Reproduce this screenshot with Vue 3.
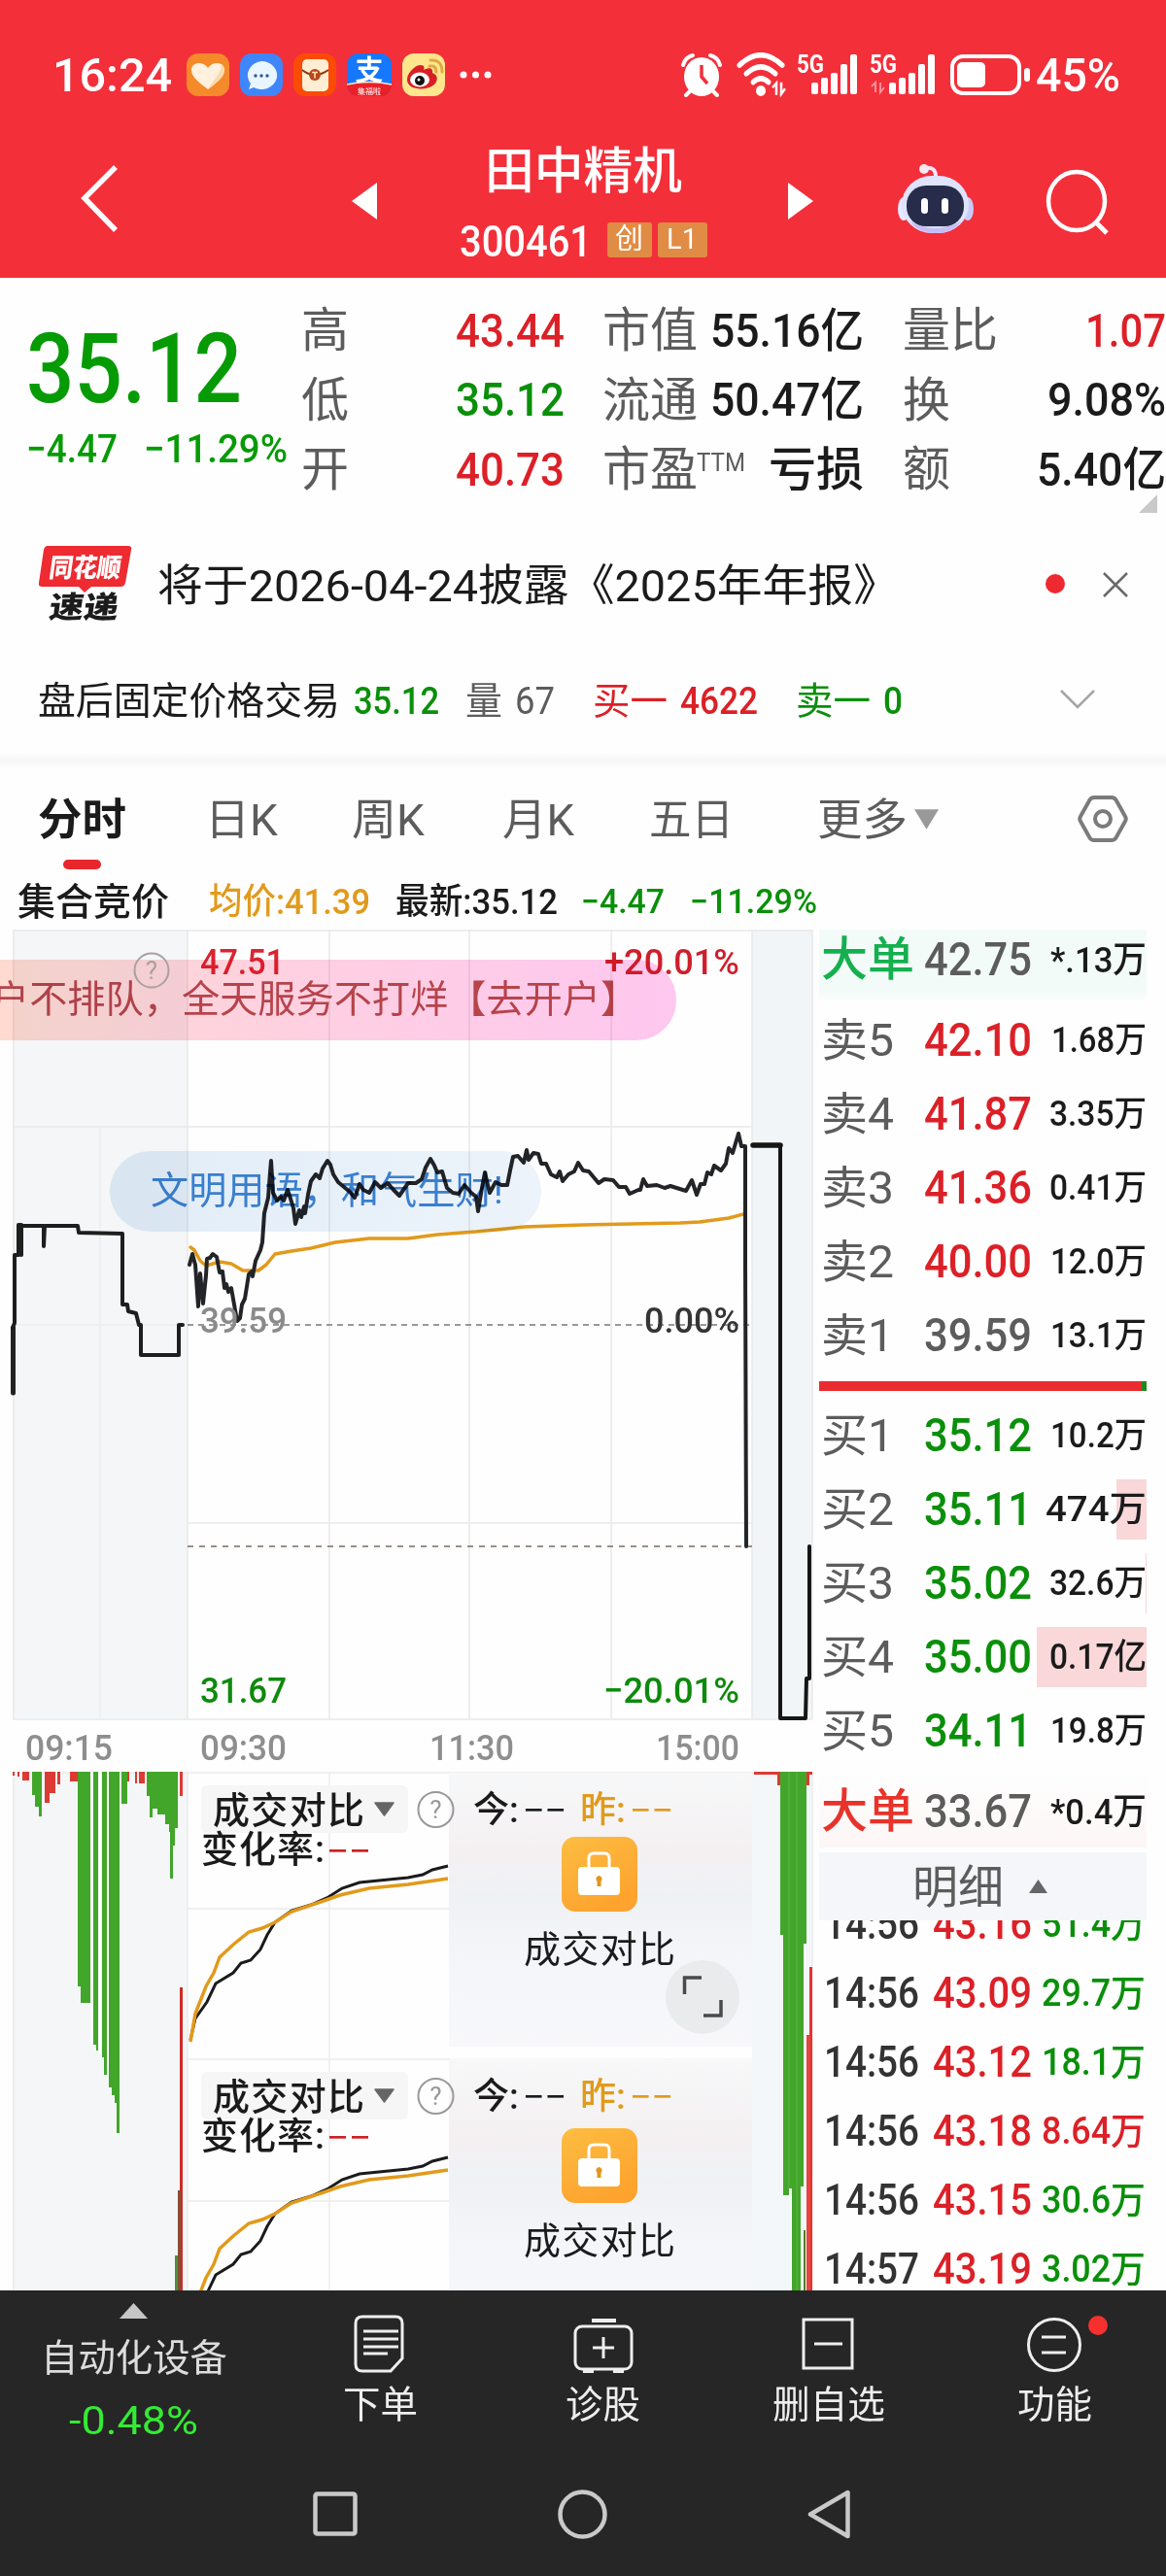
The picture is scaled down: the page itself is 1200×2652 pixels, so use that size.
<script setup>
import { h } from "vue";

// Text squeezed or stretched to a known width, centred on its own box
const Fit = (props) =>
  h("svg", { class: "fit", width: props.w, height: props.s }, [
    h(
      "text",
      {
        x: 0,
        y: props.s * 0.86,
        "font-size": props.s,
        textLength: props.w,
        lengthAdjust: "spacingAndGlyphs",
      },
      props.t
    ),
  ]);
Fit.props = ["t", "w", "s"];

const stats = [
  [
    { label: "高", lw: 49, value: "43.44", w: 112, color: "red" },
    { label: "低", lw: 49, value: "35.12", w: 112, color: "green" },
    { label: "开", lw: 49, value: "40.73", w: 112, color: "red" },
  ],
  [
    { label: "市值", lw: 98, value: "55.16亿", w: 158 },
    { label: "流通", lw: 98, value: "50.47亿", w: 158 },
    { label: "市盈", lw: 98, sup: "TTM", value: "亏损", w: 98 },
  ],
  [
    { label: "量比", lw: 98, value: "1.07", w: 83, color: "red" },
    { label: "换", lw: 49, value: "9.08%", w: 122 },
    { label: "额", lw: 49, value: "5.40亿", w: 133 },
  ],
];

const tabs = [
  { t: "分时", w: 91, active: true },
  { t: "日K", w: 75 },
  { t: "周K", w: 75 },
  { t: "月K", w: 74 },
  { t: "五日", w: 87 },
];

const sells = [
  { name: "卖5", price: "42.10", vol: "1.68万", w: 98, color: "red" },
  { name: "卖4", price: "41.87", vol: "3.35万", w: 100, color: "red" },
  { name: "卖3", price: "41.36", vol: "0.41万", w: 100, color: "red" },
  { name: "卖2", price: "40.00", vol: "12.0万", w: 99, color: "red" },
  { name: "卖1", price: "39.59", vol: "13.1万", w: 99, color: "flat" },
];

const buys = [
  { name: "买1", price: "35.12", vol: "10.2万", w: 99, bar: 0 },
  { name: "买2", price: "35.11", vol: "474万", w: 104, bar: 31 },
  { name: "买3", price: "35.02", vol: "32.6万", w: 100, bar: 1 },
  { name: "买4", price: "35.00", vol: "0.17亿", w: 100, bar: 113 },
  { name: "买5", price: "34.11", vol: "19.8万", w: 99, bar: 0 },
];

const trades = [
  { time: "14:56", price: "43.16", vol: "51.4万", color: "green" },
  { time: "14:56", price: "43.09", vol: "29.7万", color: "green" },
  { time: "14:56", price: "43.12", vol: "18.1万", color: "green" },
  { time: "14:56", price: "43.18", vol: "8.64万", color: "red" },
  { time: "14:56", price: "43.15", vol: "30.6万", color: "green" },
  { time: "14:57", price: "43.19", vol: "3.02万", color: "green" },
];

// 09:15 - 09:25
const openAuction =
  "13,410 15,405 15,335 15,335 19,335 19,304 22,304 22,335 22,305 45,305 45,326 46,305 80,305 81,312 126,313 126,386 131,386 132,393 140,395 143,407 145,407 145,438 184,438 184,407 188,407";

const price =
  "195,345 198,334 201,345 204,388 206,354 209,385 212,356 213,339 216,338 219,334 223,337 226,353 229,352 231,369 233,365 235,373 238,369 241,386 244,403 247,400 249,386 252,380 256,355 259,352 260,357 263,341 268,330 270,322 272,292 276,276 278,250 279,238 281,271 285,279 289,275 292,279 296,268 299,277 302,287 304,303 308,289 310,296 313,285 314,292 317,273 320,259 325,252 329,256 332,246 337,238 340,242 343,252 348,260 354,265 360,270 365,276 370,262 374,268 380,271 386,260 392,266 399,261 405,268 411,274 420,261 428,261 434,257 438,245 443,236 447,243 450,250 455,249 460,266 466,271 472,272 478,263 485,271 490,275 492,290 496,266 499,250 502,263 504,271 510,260 516,263 522,263 525,248 528,234 533,233 539,240 542,227 544,237 549,230 554,231 557,241 562,241 567,252 573,255 576,249 579,259 585,252 591,249 595,240 600,248 606,249 616,261 622,257 631,258 637,265 644,265 648,272 657,268 659,268 662,257 666,264 676,263 684,266 690,264 706,269 712,258 717,273 721,262 725,262 728,250 732,252 735,243 742,248 747,241 750,225 754,230 760,210 763,223 767,223 767,343 768,635";

const average =
  "196,327 200,330 206,341 212,346 226,342 238,344 250,351 266,351 274,345 283,334 300,331 320,328 345,322 380,318 420,318 450,314 490,311 540,306 600,304 700,302 720,301 750,297 765,293";

// [x, width, height] hanging from the top edge
const openVolume = [
  [13, 2, 4, "r"], [18, 2, 5, "r"], [23, 7, 9, "r"],
  [33, 3, 24, "g"], [36, 4, 36, "g"], [40, 3, 46, "g"],
  [46, 5, 32, "r"], [51, 6, 22, "r"], [59, 3, 13, "r"], [72, 8, 10, "r"],
  [80, 3, 221, "g"], [83, 10, 238, "g"], [96, 3, 281, "g"], [99, 2, 287, "g"],
  [105, 3, 294, "g"], [107, 3, 312, "g"], [112, 3, 325, "g"], [115, 3, 333, "g"],
  [118, 3, 341, "g"], [120, 3, 372, "g"], [125, 6, 33, "g"], [131, 2, 10, "r"],
  [139, 2, 12, "r"], [143, 6, 12, "r"], [151, 3, 25, "g"], [154, 3, 47, "g"],
  [157, 5, 38, "g"], [162, 8, 44, "g"], [170, 4, 54, "g"], [174, 2, 62, "g"],
  [175, 3, 110, "g"], [178, 2, 76, "g"], [180, 3, 58, "g"], [185, 3, 25, "r"],
];

const closeVolume = [
  [776, 24, 3, "r"], [800, 3, 14, "r"], [830, 3, 14, "r"], [833, 3, 3, "r"],
  [803, 3, 168, "g"], [806, 6, 436, "g"], [812, 3, 429, "g"], [815, 9, 534, "g"],
  [824, 3, 427, "g"], [827, 3, 177, "g"],
];

const compareToday =
  "196,276 201,254 213,237 222,218 240,207 248,197 258,194 268,183 275,168 283,155 300,143 320,137 338,129 352,120 370,114 400,111 420,109 435,106 445,101 461,97";
const compareYesterday =
  "196,278 201,249 212,221 220,207 226,191 240,178 256,165 270,161 283,155 300,144 330,134 350,127 380,120 420,116 461,110";
</script>

<template>
  <div class="page">
    <header class="header">
      <div class="status">
        <Fit class="medium" t="16:24" :w="123" :s="48" />
        <div class="apps">
          <svg width="44" height="44" viewBox="0 0 44 44">
            <rect width="44" height="44" rx="12" fill="#f58a2b" />
            <path d="M22 37C10 28 5 23 5 17c0-8 12-10 17-2 5-8 17-6 17 2 0 6-5 11-17 20z" fill="#fff1dd" />
            <path d="M22 37C27 27 36 21 36 11c6 5 3 14-14 26z" fill="#fbd9ae" />
          </svg>
          <svg width="44" height="44" viewBox="0 0 44 44">
            <rect width="44" height="44" rx="12" fill="#3f86fb" />
            <path d="M22 8a16 14.500 0 1 1-8 27l-5 2 2-6A16 14.500 0 0 1 22 8z" fill="#e9f5ff" />
            <circle cx="16" cy="23" r="1.700" fill="#2b5b96" />
            <circle cx="22" cy="23" r="1.700" fill="#2b5b96" />
            <circle cx="28" cy="23" r="1.700" fill="#2b5b96" />
          </svg>
          <svg width="44" height="44" viewBox="0 0 44 44">
            <rect width="44" height="44" rx="12" fill="#fb4b05" />
            <rect x="9" y="6" width="27" height="33" rx="5" fill="#ffeed3" />
            <path d="M9 17q6 5 13 5t14-5" fill="none" stroke="#8a3a10" stroke-width="2" />
            <circle cx="22" cy="22" r="6" fill="#b7481b" />
            <path d="M19 19.500h6M22 19.500v6" stroke="#ffe2b0" stroke-width="1.600" />
          </svg>
          <svg width="46" height="44" viewBox="0 0 46 44">
            <rect width="46" height="44" rx="12" fill="#1677ff" />
            <path d="M0 32q23-5 46 0v2q-2 10-12 10H12Q2 44 0 34z" fill="#e9202a" />
            <path d="M0 32q23-5 46 0" fill="none" stroke="#ffe9c8" stroke-width="1.500" />
            <text x="23" y="28" font-size="29" font-weight="700" text-anchor="middle" fill="#fff">支</text>
            <text x="23" y="42" font-size="8" text-anchor="middle" fill="#fff">集福啦</text>
          </svg>
          <svg width="44" height="44" viewBox="0 0 44 44">
            <rect width="44" height="44" rx="12" fill="#fde68c" />
            <path d="M5 27c0-7 8-15 14-15 4 0 4 3 3 5 6-3 10-2 9 3 6 2 6 8 2 12-8 7-28 6-28-5z" fill="#d81f26" />
            <ellipse cx="18" cy="27" rx="10" ry="7.500" fill="#fff" />
            <circle cx="18" cy="28" r="5" fill="#111" />
            <circle cx="17" cy="27" r="1.500" fill="#fff" />
            <path d="M28 13q7-1 7 6M29 7q12-1 12 12" fill="none" stroke="#e3a843" stroke-width="3" stroke-linecap="round" />
          </svg>
          <svg class="dots" width="34" height="8" viewBox="0 0 34 8">
            <circle cx="4" cy="4" r="3.500" fill="#fff" />
            <circle cx="16.500" cy="4" r="3.500" fill="#fff" />
            <circle cx="29" cy="4" r="3.500" fill="#fff" />
          </svg>
        </div>
        <div class="signals">
          <svg width="42" height="46" viewBox="0 0 42 46">
            <ellipse cx="21" cy="25" rx="18" ry="20" fill="#fff" />
            <path d="M2 13Q4 5 12 3M40 13Q38 5 30 3M9 40l-4 4M33 40l4 4" fill="none" stroke="#fff" stroke-width="4" stroke-linecap="round" />
            <path d="M21 13v12l6 7" fill="none" stroke="#f32f3a" stroke-width="3.500" />
          </svg>
          <svg width="52" height="46" viewBox="0 0 52 42" preserveAspectRatio="none">
            <g fill="none" stroke="#fff" stroke-width="5" stroke-linecap="round">
              <path d="M3 12Q25-7 47 12" />
              <path d="M10 20Q25 7 40 20" />
              <path d="M17 28Q25 21 33 28" />
            </g>
            <circle cx="25" cy="36" r="5" fill="#fff" />
            <path d="M37 33l4-4v11M50 34l-4 5V28" fill="none" stroke="#fff" stroke-width="2.500" />
          </svg>
          <svg width="62" height="44" viewBox="0 0 62 44">
            <text x="0" y="20" font-size="26" font-weight="700" textLength="28" lengthAdjust="spacingAndGlyphs" fill="#fff">5G</text>
            <g fill="#fff">
              <rect x="15" y="30" width="7" height="12" rx="2" />
              <rect x="25" y="25" width="7" height="17" rx="2" />
              <rect x="35" y="20" width="7" height="22" rx="2" />
              <rect x="45" y="11" width="7" height="31" rx="2" />
              <rect x="55" y="1" width="7" height="41" rx="2" />
            </g>
          </svg>
          <svg width="67" height="44" viewBox="0 0 67 44">
            <text x="0" y="20" font-size="26" font-weight="700" textLength="28" lengthAdjust="spacingAndGlyphs" fill="#fff">5G</text>
            <path d="M2 34l4-4v10M15 35l-4 5V30" fill="none" stroke="#fb9197" stroke-width="2" />
            <g fill="#fff">
              <rect x="20" y="30" width="7" height="12" rx="2" />
              <rect x="30" y="25" width="7" height="17" rx="2" />
              <rect x="40" y="20" width="7" height="22" rx="2" />
              <rect x="50" y="11" width="7" height="31" rx="2" />
              <rect x="60" y="1" width="7" height="41" rx="2" />
            </g>
          </svg>
          <svg class="battery" width="82" height="42" viewBox="0 0 82 42">
            <rect x="2" y="2" width="69" height="38" rx="11" fill="none" stroke="#fff" stroke-width="4" />
            <rect x="7" y="8" width="29" height="26" rx="5" fill="#fff" />
            <rect x="76" y="14" width="6" height="14" rx="3" fill="#fff" />
          </svg>
          <Fit class="medium pct" t="45%" :w="87" :s="48" />
        </div>
      </div>

      <div class="titlebar">
        <svg class="back" width="40" height="70" viewBox="0 0 40 70">
          <path d="M37 2L5 34l32 33" fill="none" stroke="#fff" stroke-width="5.500" />
        </svg>
        <svg class="prev" width="26" height="38" viewBox="0 0 26 38"><path d="M26 0v38L0 19z" fill="#fff" /></svg>
        <div class="name">
          <Fit class="medium" t="田中精机" :w="203" :s="51" />
          <div class="code">
            <Fit class="medium" t="300461" :w="136" :s="45" />
            <span class="tag">创</span>
            <span class="tag l1">L1</span>
          </div>
        </div>
        <svg class="next" width="26" height="38" viewBox="0 0 26 38"><path d="M0 0v38l26-19z" fill="#fff" /></svg>
        <svg class="robot" width="80" height="74" viewBox="0 0 80 74">
          <path d="M40 14Q40 3 29 5" fill="none" stroke="#f5e8fa" stroke-width="4" />
          <circle cx="28" cy="6" r="5" fill="#f9e9f2" />
          <ellipse cx="7" cy="47" rx="6" ry="12" fill="#e6e9ff" />
          <ellipse cx="73" cy="47" rx="6" ry="12" fill="#c8cbfa" />
          <rect x="5" y="13" width="69" height="59" rx="31" fill="#dfe3fd" />
          <path d="M14 60Q38 74 66 60Q58 72 40 72T14 60z" fill="#c6bdf5" />
          <rect x="10" y="23" width="59" height="42" rx="20" fill="#262c4a" />
          <rect x="25" y="36" width="7" height="16" rx="3.500" fill="#fff" />
          <rect x="46" y="36" width="7" height="16" rx="3.500" fill="#fff" />
        </svg>
        <svg class="search" width="66" height="68" viewBox="0 0 66 68">
          <ellipse cx="32" cy="33" rx="29" ry="30" fill="none" stroke="#fff" stroke-width="4.500" />
          <path d="M51 54l12 12" stroke="#fff" stroke-width="5" />
        </svg>
      </div>
    </header>

    <section class="quote">
      <div class="last green">
        <Fit class="medium" t="35.12" :w="222" :s="100" />
        <div class="change">
          <Fit class="medium" t="−4.47" :w="94" :s="41" />
          <Fit class="medium" t="−11.29%" :w="148" :s="41" />
        </div>
      </div>
      <div v-for="(col, i) in stats" :key="i" class="stat-col" :class="'c' + i">
        <div v-for="s in col" :key="s.label" class="stat">
          <Fit class="label" :t="s.label" :w="s.lw" :s="49" />
          <Fit v-if="s.sup" class="label sup" :t="s.sup" :w="50" :s="26" />
          <Fit class="value medium" :class="s.color" :t="s.value" :w="s.w" :s="48" />
        </div>
      </div>
      <i class="corner"></i>
    </section>

    <section class="notice">
      <svg class="brand" width="97" height="80" viewBox="0 0 97 80">
        <path d="M9 0h83q4 0 3 4l-6 34q-1 4-5 4H54l-7 6-6-6H3q-4 0-3-4L5 4q1-4 4-4z" fill="#ed2b31" />
        <g font-weight="900" transform="skewX(-8)">
          <text x="14" y="32" font-size="27" textLength="74" lengthAdjust="spacingAndGlyphs" fill="#fff">同花顺</text>
          <text x="20" y="74" font-size="31" textLength="71" lengthAdjust="spacingAndGlyphs" fill="#1c1c1c">速递</text>
        </g>
      </svg>
      <Fit t="将于2026-04-24披露《2025年年报》" :w="763" :s="45" />
      <svg class="close" width="86" height="26" viewBox="0 0 86 26">
        <circle cx="11" cy="12" r="10" fill="#ee2a30" />
        <path d="M61 1l24 24M85 1L61 25" stroke="#6a6a6a" stroke-width="2.500" />
      </svg>
    </section>

    <section class="after">
      <Fit t="盘后固定价格交易" :w="311" :s="39" />
      <Fit class="green medium a1" t="35.12" :w="88" :s="39" />
      <Fit class="label a2" t="量" :w="38" :s="39" />
      <Fit class="label a3" t="67" :w="41" :s="39" />
      <Fit class="red a4" t="买一" :w="77" :s="39" />
      <Fit class="red medium a3" t="4622" :w="80" :s="39" />
      <Fit class="green a5" t="卖一" :w="77" :s="39" />
      <Fit class="green medium a3" t="0" :w="20" :s="39" />
      <svg class="more" width="36" height="20" viewBox="0 0 36 20">
        <path d="M1 1l17 17L35 1" fill="none" stroke="#a5a5a5" stroke-width="2.500" />
      </svg>
    </section>

    <div class="band"></div>

    <nav class="tabs">
      <div v-for="tab in tabs" :key="tab.t" class="tab" :class="{ active: tab.active }">
        <Fit :t="tab.t" :w="tab.w" :s="45" />
      </div>
      <div class="tab all">
        <Fit t="更多" :w="93" :s="45" />
        <svg width="25" height="21" viewBox="0 0 27 22"><path d="M0 0h27L13.500 22z" fill="#999" /></svg>
      </div>
      <svg class="gear" width="52" height="50" viewBox="0 0 52 50">
        <path d="M17 3h18q3 0 4.500 2.500l9.500 17q1.500 2.500 0 5l-9.500 17Q38 47 35 47H17q-3 0-4.500-2.500l-9.500-17q-1.500-2.500 0-5l9.500-17Q14 3 17 3z" fill="none" stroke="#7b7b7b" stroke-width="4" />
        <circle cx="26" cy="25" r="8" fill="none" stroke="#7b7b7b" stroke-width="4" />
      </svg>
    </nav>

    <div class="info">
      <Fit class="medium" t="集合竞价" :w="156" :s="39" />
      <Fit class="medium gold i1" t="均价:41.39" :w="166" :s="37" />
      <Fit class="medium i2" t="最新:35.12" :w="167" :s="37" />
      <Fit class="medium green i3" t="−4.47" :w="86" :s="35" />
      <Fit class="medium green i2" t="−11.29%" :w="131" :s="35" />
    </div>

    <main class="main">
      <div class="charts">
        <svg class="chart" width="843" height="816" viewBox="0 0 843 816">
          <rect x="13" y="0" width="180" height="813" fill="#f4f6f7" />
          <rect x="774" y="0" width="62" height="813" fill="#f2f5f7" />
          <g stroke="#e9e9e9" stroke-width="1.500">
            <path d="M13 1h823M13 203h761M193 611h581M13 813h823" />
            <path d="M14 0v813M193 0v813M339 0v813M483 0v813M629 0v813M774 0v813M836 0v813" />
            <path d="M103 203v610M13 407h180" stroke="#ebedee" />
          </g>
          <path d="M193 407h581" stroke="#777" stroke-width="1.500" stroke-dasharray="6 5" />
          <path d="M193 635h581" stroke="#9a8f85" stroke-width="2" stroke-dasharray="6 6" />
          <g fill="none" stroke-linejoin="round" stroke-linecap="round">
            <polyline :points="average" stroke="#e29a1b" stroke-width="3.500" />
            <path d="M13.500 410v67" stroke="#222" stroke-width="5" />
            <polyline :points="openAuction" stroke="#1e1e1e" stroke-width="4" />
            <polyline :points="price" stroke="#222427" stroke-width="4" />
            <polyline points="775,222 803,222 803,812 829,812 830,771 833,771 833,635" stroke="#161616" stroke-width="4" />
            <path d="M775 222h28" stroke="#161616" stroke-width="5.500" />
          </g>
          <g font-size="37" font-weight="500">
            <text x="206" y="46" textLength="87" lengthAdjust="spacingAndGlyphs" fill="#dc2331">47.51</text>
            <text x="622" y="46" textLength="139" lengthAdjust="spacingAndGlyphs" fill="#cf1f2c">+20.01%</text>
            <text x="206" y="415" textLength="89" lengthAdjust="spacingAndGlyphs" fill="#8a8a8a">39.59</text>
            <text x="663" y="415" textLength="98" lengthAdjust="spacingAndGlyphs" fill="#353535">0.00%</text>
            <text x="206" y="796" textLength="89" lengthAdjust="spacingAndGlyphs" fill="#0d8a0d">31.67</text>
            <text x="621" y="796" textLength="140" lengthAdjust="spacingAndGlyphs" fill="#0d8a0d">−20.01%</text>
          </g>
        </svg>

        <div class="pill ad">户不排队，全天服务不打烊【去开户】</div>
        <div class="pill tip">文明用语，和气生财!</div>
        <svg class="ask" width="38" height="38" viewBox="0 0 38 38">
          <circle cx="19" cy="19" r="17.500" fill="none" stroke="#aaa0a0" stroke-width="2" />
          <text x="19" y="28" font-size="26" text-anchor="middle" fill="#aaa0a0">?</text>
        </svg>

        <div class="times">
          <Fit class="medium" t="09:15" :w="90" :s="37" />
          <Fit class="medium" t="09:30" :w="89" :s="37" />
          <Fit class="medium" t="11:30" :w="87" :s="37" />
          <Fit class="medium" t="15:00" :w="86" :s="37" />
        </div>

        <svg class="volume" width="843" height="534" viewBox="0 0 843 534">
          <defs>
            <linearGradient id="frost" x1="0" y1="0" x2="0" y2="1">
              <stop offset="0" stop-color="#f7f8f9" />
              <stop offset="0.300" stop-color="#f4f0f2" />
              <stop offset="0.450" stop-color="#eff2f5" />
              <stop offset="0.650" stop-color="#f3f5f9" />
              <stop offset="1" stop-color="#f8f8fb" />
            </linearGradient>
            <linearGradient id="lock" x1="0" y1="0" x2="0.500" y2="1">
              <stop offset="0" stop-color="#fdbd42" />
              <stop offset="1" stop-color="#fda32e" />
            </linearGradient>
          </defs>
          <rect x="13" y="0" width="180" height="534" fill="#f4f6f7" />
          <rect x="774" y="0" width="62" height="534" fill="#f4f7f9" />
          <g stroke="#ebebeb" stroke-width="1.500">
            <path d="M13 1h823M193 141h581M193 296h581M193 442h581" />
            <path d="M14 0v534M193 0v534M339 0v534M836 0v534" />
          </g>
          <rect
            v-for="(b, i) in [...openVolume, ...closeVolume]"
            :key="i"
            :x="b[0]"
            y="0"
            :width="b[1]"
            :height="b[2]"
            :fill="b[3] === 'g' ? '#42a62b' : '#dc3a34'"
          />
          <path d="M94.500 0v280M103 0v290M111 0v300" stroke="#fff" stroke-width="2" />
          <path d="M812 0v429M820 0v534" stroke="#5cb447" stroke-width="1" />
          <rect x="185" y="222" width="3" height="312" fill="#cf2a26" />
          <rect x="183" y="431" width="3" height="103" fill="#8a4a35" />
          <rect x="180" y="498" width="3" height="36" fill="#4f8f3c" />
          <rect x="833" y="201" width="3" height="333" fill="#e5342f" />
          <rect x="830" y="271" width="4" height="263" fill="#e5453c" />
          <rect x="827" y="472" width="2" height="62" fill="#4f7f2c" />

          <g v-for="n in 2" :key="n" :transform="`translate(0 ${(n - 1) * 300})`">
            <rect x="462" :y="n === 1 ? 1 : -5" width="312" height="282" fill="url(#frost)" />
            <polyline :points="compareToday" fill="none" stroke="#1b1b1b" stroke-width="3" />
            <polyline :points="compareYesterday" fill="none" stroke="#e29a1b" stroke-width="3.500" />
            <rect x="578" y="67" width="78" height="77" rx="14" fill="url(#lock)" />
            <rect x="595" y="98" width="43" height="29" rx="4" fill="#fff" />
            <path d="M606 98v-9q0-5 5-5h11q5 0 5 5v9" fill="none" stroke="#fff" stroke-width="3" />
            <path d="M616.500 107a3.500 3.500 0 0 1 2 6v5h-4v-5a3.500 3.500 0 0 1 2-6z" fill="#e3951e" />
            <text x="539" y="196" font-size="38" textLength="156" fill="#1b1b1b">成交对比</text>
          </g>
          <g v-for="n in 2" :key="'t' + n" :transform="`translate(0 ${(n - 1) * 295})`" font-size="38">
            <rect x="207" y="14" width="213" height="49" rx="6" fill="#f6f6f6" />
            <text x="219" y="53" textLength="156" font-weight="500" fill="#1b1b1b">成交对比</text>
            <path d="M386 32h19l-9.500 13z" fill="#666" stroke="#666" stroke-width="1.500" stroke-linejoin="round" />
            <circle cx="448.500" cy="39" r="18" fill="none" stroke="#999" stroke-width="2" />
            <text x="448.500" y="48" font-size="26" text-anchor="middle" fill="#999">?</text>
            <text x="487" y="52" font-size="37" font-weight="500" fill="#1b1b1b">今:</text>
            <text x="597" y="52" font-size="37" font-weight="500" fill="#e29a1b">昨:</text>
            <text class="dash" x="538" y="50" textLength="45" lengthAdjust="spacingAndGlyphs" fill="#1b1b1b">--</text>
            <text class="dash" x="648" y="50" textLength="45" lengthAdjust="spacingAndGlyphs" fill="#e29a1b">--</text>
            <text x="207" y="93" textLength="127" font-weight="500" fill="#1b1b1b">变化率:</text>
            <text class="dash" x="336" y="92" textLength="46" lengthAdjust="spacingAndGlyphs" fill="#cc2226">--</text>
          </g>
          <circle cx="723" cy="232" r="38" fill="#e9ebed" />
          <path d="M704.500 229v-17H722M742 235v16h-18" fill="none" stroke="#4a4a4a" stroke-width="3.500" />
        </svg>
      </div>

      <aside class="book">
        <div class="row big up">
          <Fit class="medium tealish" t="大单" :w="96" :s="48" />
          <Fit class="medium flat" t="42.75" :w="111" :s="48" />
          <Fit class="medium vol" t="*.13万" :w="99" :s="37" />
        </div>
        <div v-for="r in sells" :key="r.name" class="row">
          <Fit class="label" :t="r.name" :w="75" :s="47" />
          <Fit class="medium" :class="r.color" :t="r.price" :w="111" :s="48" />
          <Fit class="medium vol" :t="r.vol" :w="r.w" :s="36" />
        </div>
        <div class="ratio"></div>
        <div v-for="r in buys" :key="r.name" class="row">
          <i v-if="r.bar" class="depth" :style="{ width: r.bar + 'px' }"></i>
          <Fit class="label" :t="r.name" :w="75" :s="47" />
          <Fit class="medium green" :t="r.price" :w="111" :s="48" />
          <Fit class="medium vol" :t="r.vol" :w="r.w" :s="36" />
        </div>
        <div class="row big down">
          <Fit class="medium hot" t="大单" :w="96" :s="48" />
          <Fit class="medium flat" t="33.67" :w="111" :s="48" />
          <Fit class="medium vol" t="*0.4万" :w="99" :s="37" />
        </div>
        <div class="detail">
          <Fit t="明细" :w="94" :s="47" />
          <svg width="19" height="14" viewBox="0 0 19 14"><path d="M0 14h19L9.500 0z" fill="#666" /></svg>
        </div>
        <div class="trades">
          <div v-for="(r, i) in trades" :key="i" class="trade">
            <Fit class="medium dark" :t="r.time" :w="98" :s="44" />
            <Fit class="medium red" :t="r.price" :w="102" :s="44" />
            <Fit class="medium" :class="r.color" :t="r.vol" :w="107" :s="38" />
          </div>
        </div>
      </aside>
    </main>

    <footer class="footer">
      <div class="actions">
        <div class="sector">
          <svg width="29" height="16" viewBox="0 0 29 16"><path d="M0 16h29L14.500 0z" fill="#c6c6c6" /></svg>
          <Fit t="自动化设备" :w="192" :s="38.500" />
          <Fit class="lime" t="-0.48%" :w="133" :s="41" />
        </div>
        <div class="action">
          <svg width="62" height="60" viewBox="0 0 62 60">
            <path d="M13 2h34q7 0 7 7v36L42 58H13q-7 0-7-7V9q0-7 7-7z" fill="none" stroke="#eee" stroke-width="3" />
            <path d="M14 17h36M14 25h36M14 33h36M14 40h25" stroke="#eee" stroke-width="3" />
          </svg>
          <Fit t="下单" :w="77" :s="38.500" />
        </div>
        <div class="action">
          <svg width="62" height="60" viewBox="0 0 62 60">
            <path d="M19 6h25" stroke="#eee" stroke-width="4" />
            <rect x="2" y="12" width="58" height="44" rx="7" fill="none" stroke="#eee" stroke-width="3" />
            <path d="M31 23v22M20 34h22" stroke="#eee" stroke-width="3" />
            <path d="M10 58h11M41 58h11" stroke="#eee" stroke-width="4" />
          </svg>
          <Fit t="诊股" :w="77" :s="38.500" />
        </div>
        <div class="action">
          <svg width="62" height="60" viewBox="0 0 62 60">
            <rect x="5" y="5" width="50" height="50" fill="none" stroke="#eee" stroke-width="3" />
            <path d="M16 30h29" stroke="#eee" stroke-width="3" />
          </svg>
          <Fit t="删自选" :w="116" :s="38.500" />
        </div>
        <div class="action">
          <svg width="62" height="60" viewBox="0 0 62 60">
            <circle cx="31" cy="31" r="26.500" fill="none" stroke="#eee" stroke-width="3" />
            <path d="M18 23h25M18 39h25" stroke="#eee" stroke-width="3" />
          </svg>
          <Fit t="功能" :w="77" :s="38.500" />
          <i class="badge"></i>
        </div>
      </div>
      <div class="system">
        <svg width="46" height="46" viewBox="0 0 46 46">
          <rect x="2.500" y="2.500" width="41" height="41" rx="2" fill="none" stroke="#c9c9c9" stroke-width="4.500" />
        </svg>
        <svg width="51" height="51" viewBox="0 0 51 51">
          <circle cx="25.500" cy="25.500" r="23" fill="none" stroke="#c9c9c9" stroke-width="4.500" />
        </svg>
        <svg width="45" height="51" viewBox="0 0 45 51">
          <path d="M41.500 3v45L3 25.500z" fill="none" stroke="#c9c9c9" stroke-width="4.500" stroke-linejoin="round" />
        </svg>
      </div>
    </footer>
  </div>
</template>

<style>
body {
  margin: 0;
}
</style>

<style scoped>
.page {
  width: 1200px;
  height: 2652px;
  overflow: hidden;
  background: #fefefe;
  color: #1b1b1b;
  font-family: Roboto, "Noto Sans CJK SC", sans-serif;
}

svg {
  display: block;
  flex-shrink: 0;
}

.fit {
  overflow: visible;
  fill: currentColor;
}

.dash {
  font-family: "Noto Sans CJK SC", sans-serif;
}

.medium {
  font-weight: 500;
}

.red {
  color: #dc2027;
}

.green {
  color: #0a8f0a;
}

.gold {
  color: #e29a1b;
}

.flat,
.label {
  color: #5c5c5c;
}

/* --- header --- */
.header {
  height: 286px;
  background: #f32f3a;
  color: #fff;
}

.status {
  box-sizing: border-box;
  height: 136px;
  padding: 18px 47px 0 54px;
  display: flex;
  align-items: center;
}

.apps {
  display: flex;
  align-items: center;
  gap: 11px;
  margin-left: 15px;
}

.dots {
  margin-left: 4px;
}

.signals {
  display: flex;
  align-items: center;
  gap: 13px;
  margin-left: auto;
}

.signals svg:nth-child(2) {
  margin-left: 2px;
}

.signals svg:nth-child(3) {
  margin-left: -3px;
}

.battery {
  margin-left: 3px;
}

.signals .pct {
  margin-left: -7px;
}

.titlebar {
  height: 150px;
  display: flex;
  align-items: flex-start;
}

.back {
  margin: 34px 0 0 82px;
}

.prev {
  margin: 52px 0 0 240px;
}

.name {
  width: 254px;
  margin: 14px 0 0 85px;
  display: flex;
  flex-direction: column;
  align-items: center;
}

.code {
  display: flex;
  align-items: center;
  gap: 6px;
  margin-top: 28px;
  height: 36px;
}

.tag {
  width: 46px;
  height: 36px;
  margin-left: 10px;
  border-radius: 3px;
  background: #e08c45;
  font-size: 29px;
  line-height: 35px;
  text-align: center;
}

.tag.l1 {
  width: 51px;
  margin-left: 0;
}

.next {
  margin: 52px 0 0 84px;
}

.robot {
  margin: 32px 0 0 86px;
}

.search {
  margin: 38px 0 0 73px;
}

/* --- quote --- */
.quote {
  position: relative;
  box-sizing: border-box;
  height: 250px;
  padding: 18px 0 0 27px;
  display: flex;
  align-items: flex-start;
}

.last {
  width: 283px;
  padding-top: 24px;
}

.last.green {
  color: #069b05;
}

.change {
  display: flex;
  gap: 27px;
  margin-top: 13px;
}

.stat {
  display: flex;
  align-items: center;
  height: 71.5px;
}

.c0 {
  width: 271px;
}

.c1 {
  width: 269px;
  margin-left: 39px;
}

.c2 {
  width: 271px;
  margin-left: 40px;
}

.value {
  margin-left: auto;
}

.sup {
  margin: 0 0 13px -1px;
}

.corner {
  position: absolute;
  right: 9px;
  top: 223px;
  border-left: 19px solid transparent;
  border-bottom: 19px solid #c9c9c9;
}

/* --- notice --- */
.notice {
  height: 132px;
  padding-left: 40px;
  display: flex;
  align-items: center;
}

.brand {
  margin-right: 25px;
}

.close {
  margin-left: 150px;
}

.after {
  height: 104px;
  padding: 0 0 2px 39px;
  display: flex;
  align-items: center;
}

.a1 {
  margin-left: 14px;
}

.a2 {
  margin-left: 27px;
}

.a3 {
  margin-left: 13px;
}

.a4 {
  margin-left: 39px;
}

.a5 {
  margin-left: 39px;
}

.more {
  margin-left: 162px;
}

.band {
  height: 18px;
  background: linear-gradient(#fefefe, #f6f6f6, #fefefe);
}

/* --- tabs --- */
.tabs {
  height: 102px;
  padding-left: 39px;
  display: grid;
  grid-template-columns: 172px 151px 155px 151px 173px 268px 60px;
  align-items: center;
  color: #5c5c5c;
}

.tab {
  position: relative;
}

.tab.active {
  color: #1b1b1b;
  font-weight: 700;
}

.tab.active::after {
  content: "";
  position: absolute;
  left: 26px;
  bottom: -29px;
  width: 39px;
  height: 10px;
  border-radius: 5px;
  background: #e8272c;
}

.tab.all {
  display: flex;
  align-items: center;
  gap: 7px;
}

.info {
  box-sizing: border-box;
  height: 63px;
  padding: 4px 0 0 18px;
  display: flex;
  align-items: center;
}

.i1 {
  margin-left: 41px;
}

.i2 {
  margin-left: 26px;
}

.i3 {
  margin-left: 24px;
}

/* --- charts --- */
.main {
  display: flex;
  height: 1401px;
  overflow: hidden;
}

.charts {
  position: relative;
  width: 843px;
}

.pill {
  position: absolute;
  height: 83px;
  font-size: 39.2px;
  line-height: 82px;
  white-space: nowrap;
  mix-blend-mode: multiply;
}

.ad {
  left: 0;
  top: 31px;
  width: 696px;
  border-radius: 0 41px 41px 0;
  background: linear-gradient(90deg, #ffdbd2, #ffd0e4 50%, #ffc8f0);
  color: #b8434b;
  text-indent: -9px;
  overflow: hidden;
}

.tip {
  left: 113px;
  top: 228px;
  width: 444px;
  border-radius: 42px;
  background: linear-gradient(90deg, #e3eef9, #edf4fb);
  color: #3a80d0;
  text-indent: 42px;
}

.ask {
  position: absolute;
  left: 137px;
  top: 23px;
}

.times {
  height: 51px;
  display: grid;
  grid-template-columns: 180px 236px 233px 1fr;
  align-items: center;
  padding-left: 26px;
  color: #8e8e8e;
}

/* --- order book --- */
.book {
  width: 337px;
}

.row {
  position: relative;
  box-sizing: border-box;
  height: 76px;
  padding-left: 2px;
  display: grid;
  grid-template-columns: 106px 113px 1fr;
  align-items: center;
}

.row svg {
  position: relative;
}

.vol {
  justify-self: end;
}

.big.up {
  height: 75px;
  padding-bottom: 15px;
  background: linear-gradient(#f3fbf9 85%, #fefefe);
}

.tealish {
  color: #14b04e;
}

.big.down {
  margin-top: 7px;
  background: linear-gradient(#fefefe, #fdf6f6);
}

.hot {
  color: #e8332a;
}

.ratio {
  height: 10px;
  margin: 10px 0 7px;
  background: linear-gradient(90deg, #ea2c31 98.5%, #1b8a1b 98.5%);
}

.depth {
  position: absolute;
  right: 0;
  top: 8px;
  height: 62px;
  background: #fad7d9;
}

.detail {
  height: 70px;
  margin-top: 5px;
  padding-left: 96px;
  display: flex;
  align-items: center;
  gap: 26px;
  background: #f4f6f9;
  color: #5c5c5c;
}

.trades {
  height: 380px;
  overflow: hidden;
}

.trade {
  height: 71px;
  padding-left: 5px;
  display: grid;
  grid-template-columns: 112px 112px 1fr;
  align-items: center;
}

.trade:first-child {
  margin-top: -33px;
}

.dark {
  color: #333;
}

/* --- footer --- */
.footer {
  height: 296px;
  background: #262626;
  color: #ededed;
}

.actions {
  display: grid;
  grid-template-columns: 275px 232px 227px 238px 226px;
  height: 182px;
}

.sector {
  display: flex;
  flex-direction: column;
  align-items: center;
  padding: 13px 0 0;
  color: #dcdcdc;
}

.sector .fit {
  margin-top: 21px;
}

.sector .lime {
  margin-top: 24px;
  color: #35ea35;
}

.action {
  position: relative;
  display: flex;
  flex-direction: column;
  align-items: center;
  padding-top: 25px;
}

.action .fit {
  margin-top: 13px;
}

.badge {
  position: absolute;
  left: 148px;
  top: 26px;
  width: 20px;
  height: 20px;
  border-radius: 50%;
  background: #f6302f;
}

.system {
  display: flex;
  align-items: center;
  gap: 206px;
  height: 96px;
  padding-left: 322px;
}
</style>
